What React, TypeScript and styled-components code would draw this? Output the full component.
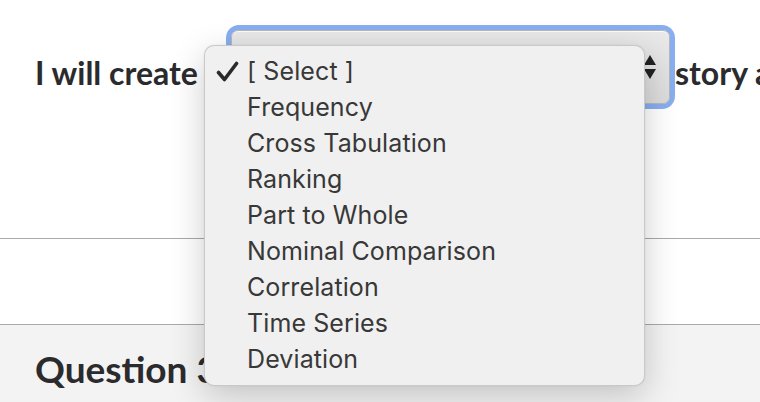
import { styled, createGlobalStyle } from "styled-components";

// GLOBAL
const GlobalStyle = createGlobalStyle`
  html, body {
    margin: 0;
    padding: 0;
    background: #ffffff;
    overflow: hidden;
  }
`;

// STYLE
const Page = styled.div`
  position: relative;
  width: 760px;
  height: 402px;
  display: flex;
  flex-direction: column;
  font-family: Lato, "Noto Sans", sans-serif;
  color: #2b2b2e;
`;

const PromptSection = styled.section`
  height: 238px;
  padding: 24px 0 0 35px;
  box-sizing: border-box;
  display: flex;
  align-items: flex-start;
  white-space: nowrap;
  overflow: hidden;
`;

const PromptText = styled.span<{ $lead?: boolean }>`
  margin-top: 33px;
  font-size: 32px;
  line-height: 32px;
  font-weight: 700;
  margin-right: ${(p) => (p.$lead ? "33px" : "0")};
`;

const SelectRing = styled.div`
  flex: none;
  margin: 6px 5px 0 0;
  border-radius: 8px;
  box-shadow: 0 0 0 5px #88aef0;
`;

const SelectBox = styled.div`
  width: 439px;
  height: 74px;
  box-sizing: border-box;
  border: 1px solid #b8b8b8;
  border-radius: 7px;
  background: linear-gradient(#e9e9e9, #dbdbdb);
  box-shadow: inset 0 1px 0 rgba(255, 255, 255, 0.8);
  display: flex;
  align-items: center;
  justify-content: flex-end;
  padding-right: 12px;
`;

const Divider = styled.hr`
  margin: 0;
  border: none;
  height: 1px;
  background: #a9a9a9;
`;

const Spacer = styled.div`
  height: 85px;
`;

const QuestionSection = styled.section`
  flex: 1;
  background: #f3f3f3;
  padding: 25px 0 0 35px;
`;

const QuestionTitle = styled.h2`
  margin: 0;
  font-size: 37px;
  line-height: 37px;
  font-weight: 700;
`;

const Menu = styled.ul`
  position: absolute;
  left: 204px;
  top: 45px;
  width: 441px;
  height: 341px;
  box-sizing: border-box;
  margin: 0;
  padding: 7px 0 0;
  list-style: none;
  background: #f0f0f0;
  border: 1px solid rgba(0, 0, 0, 0.16);
  border-radius: 10px;
  box-shadow: 0 10px 34px rgba(0, 0, 0, 0.2), 0 0 2px rgba(0, 0, 0, 0.08);
  font-family: Inter, "Liberation Sans", sans-serif;
`;

const MenuItem = styled.li`
  height: 36px;
  display: flex;
  align-items: center;
  padding-left: 11px;
  font-size: 25px;
  color: #383838;
  letter-spacing: 0.1px;
`;

const CheckSlot = styled.span`
  width: 31px;
  display: flex;
  align-items: center;
`;

const OPTIONS = [
  "[ Select ]",
  "Frequency",
  "Cross Tabulation",
  "Ranking",
  "Part to Whole",
  "Nominal Comparison",
  "Correlation",
  "Time Series",
  "Deviation",
];

const Stepper = () => (
  <svg width="14" height="26" viewBox="0 0 14 26">
    <path d="M7 1 L13 11 H1 Z" fill="#222" />
    <path d="M7 25 L13 15 H1 Z" fill="#222" />
  </svg>
);

const Check = () => (
  <svg width="23" height="21" viewBox="0 0 23 21">
    <path
      d="M2.5 11.5 L8.5 18.5 L20.5 2.5"
      fill="none"
      stroke="#2a2a2a"
      strokeWidth="3.6"
      strokeLinecap="round"
      strokeLinejoin="round"
    />
  </svg>
);

// COMP
const App = () => {
  return (
    <Page>
      <GlobalStyle />
      <PromptSection>
        <PromptText $lead>I will create</PromptText>
        <SelectRing>
          <SelectBox>
            <Stepper />
          </SelectBox>
        </SelectRing>
        <PromptText>story about the data</PromptText>
      </PromptSection>
      <Divider />
      <Spacer />
      <Divider />
      <QuestionSection>
        <QuestionTitle>Question 3</QuestionTitle>
      </QuestionSection>

      <Menu>
        {OPTIONS.map((opt, i) => (
          <MenuItem key={opt}>
            <CheckSlot>{i === 0 && <Check />}</CheckSlot>
            {opt}
          </MenuItem>
        ))}
      </Menu>
    </Page>
  );
};

export default App;
